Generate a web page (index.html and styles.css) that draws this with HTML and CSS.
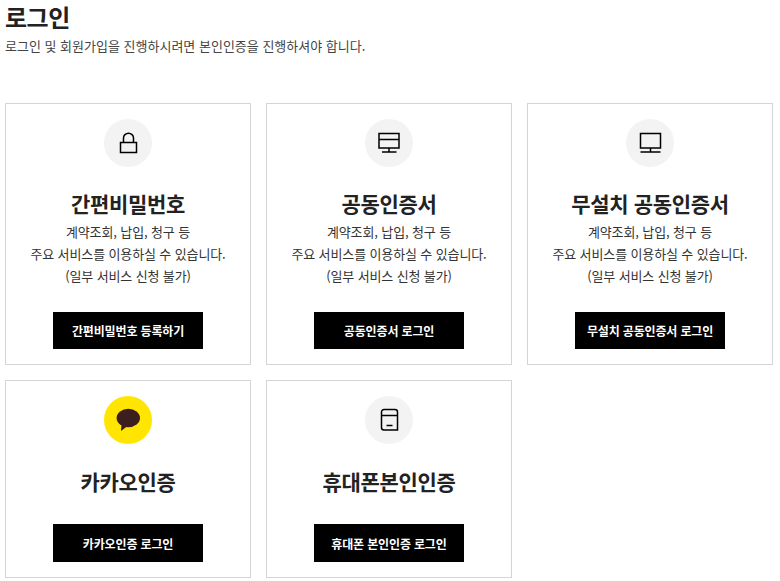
FILE: index.html
```html
<!DOCTYPE html>
<html lang="ko">
<head>
<meta charset="utf-8">
<title>로그인</title>
<link rel="stylesheet" href="styles.css">
</head>
<body>
<header class="head">
  <h1 class="page-title">로그인</h1>
  <p class="page-sub">로그인 및 회원가입을 진행하시려면 본인인증을 진행하셔야 합니다.</p>
</header>
<main class="grid">
  <section class="card">
    <span class="icon"><svg viewBox="0 0 24 24" width="24" height="24"><path class="st" d="M4.500 11.500h16v10h-16zM7.500 11.500V7a5 4.800 0 0 1 10 0v4.500"/></svg></span>
    <h2 class="card-title">간편비밀번호</h2>
    <p class="desc">계약조회, 납입, 청구 등<br>주요 서비스를 이용하실 수 있습니다.<br>(일부 서비스 신청 불가)</p>
    <a class="btn">간편비밀번호 등록하기</a>
  </section>
  <section class="card">
    <span class="icon"><svg viewBox="0 0 24 24" width="24" height="24"><path class="st" d="M2 2.500h20v14.500h-20zM2 8.500h20M12 17v4M5 21h14.500"/></svg></span>
    <h2 class="card-title">공동인증서</h2>
    <p class="desc">계약조회, 납입, 청구 등<br>주요 서비스를 이용하실 수 있습니다.<br>(일부 서비스 신청 불가)</p>
    <a class="btn">공동인증서 로그인</a>
  </section>
  <section class="card">
    <span class="icon"><svg viewBox="0 0 24 24" width="24" height="24"><path class="st" d="M2.500 2.500h20v14.500h-20zM12.500 17v4M2.500 21h20"/></svg></span>
    <h2 class="card-title">무설치 공동인증서</h2>
    <p class="desc">계약조회, 납입, 청구 등<br>주요 서비스를 이용하실 수 있습니다.<br>(일부 서비스 신청 불가)</p>
    <a class="btn">무설치 공동인증서 로그인</a>
  </section>
  <section class="card">
    <span class="icon icon-kakao"><svg viewBox="0 0 26 26" width="26" height="26"><ellipse fill="#3c1e1e" cx="13.300" cy="11" rx="11.700" ry="9.200"/><path fill="#3c1e1e" d="M6.500 17l-.5 7 6.500-5z"/></svg></span>
    <h2 class="card-title card-title-solo">카카오인증</h2>
    <a class="btn btn-tall">카카오인증 로그인</a>
  </section>
  <section class="card">
    <span class="icon"><svg viewBox="0 0 24 24" width="24" height="24"><path class="st" d="M7 1.500h11a2.500 2.500 0 0 1 2.500 2.500v18h-13.500a2.500 2.500 0 0 1-2.500-2.500v-15.500a2.500 2.500 0 0 1 2.500-2.500zM4.500 7.500h16M9.500 17.500h6"/></svg></span>
    <h2 class="card-title card-title-solo">휴대폰본인인증</h2>
    <a class="btn btn-tall">휴대폰 본인인증 로그인</a>
  </section>
</main>
</body>
</html>
```
FILE: styles.css
```css
* { box-sizing: border-box; }
html, body { margin: 0; padding: 0; }
body {
  width: 780px;
  height: 581px;
  overflow: hidden;
  background: #fff;
  padding: 0 5px;
  color: #222;
  font-family: "Noto Sans CJK KR", "Noto Sans", sans-serif;
}
.head { height: 103px; }
.page-title {
  margin: 0;
  font-size: 24px;
  line-height: 34px;
  font-weight: 700;
  letter-spacing: -0.5px;
}
.page-sub {
  margin: 3px 0 0;
  font-size: 13px;
  line-height: 18px;
  color: #444;
  letter-spacing: 0;
}
.grid {
  display: grid;
  grid-template-columns: repeat(3, 246px);
  grid-template-rows: 262px 198px;
  gap: 15px;
}
.card {
  display: flex;
  flex-direction: column;
  align-items: center;
  border: 1px solid #d5d5d5;
  padding: 15px 0;
  text-align: center;
}
.icon {
  display: flex;
  align-items: center;
  justify-content: center;
  width: 48px;
  height: 48px;
  flex: none;
  border-radius: 50%;
  background: #f3f3f3;
}
.icon-kakao { background: #ffe500; }
.st { fill: none; stroke: #000; stroke-width: 1.5; }
.card-title {
  margin: 20px 0 0;
  font-size: 21px;
  line-height: 32px;
  font-weight: 700;
  letter-spacing: -0.35px;
}
.card-title-solo { margin-top: 21px; }
.desc {
  margin: 2px 0 0;
  font-size: 13px;
  line-height: 22px;
  color: #333;
  letter-spacing: -0.12px;
}
.btn {
  display: flex;
  align-items: center;
  justify-content: center;
  width: 150px;
  height: 37px;
  margin-top: auto;
  background: #000;
  color: #fff;
  font-size: 12px;
  font-weight: 700;
  letter-spacing: -0.15px;
}
.btn-tall { height: 38px; }
```
